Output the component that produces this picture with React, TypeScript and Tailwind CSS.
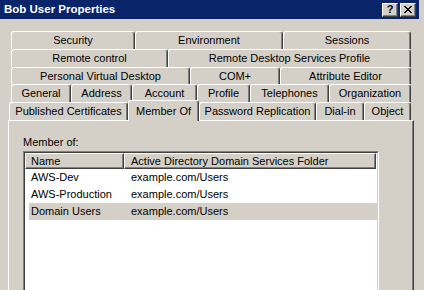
const rows: { label: string; w: string }[][] = [
  [
    { label: 'Security', w: 'w-[124px]' },
    { label: 'Environment', w: 'w-[148px]' },
    { label: 'Sessions', w: 'w-[128px]' },
  ],
  [
    { label: 'Remote control', w: 'w-[157px]' },
    { label: 'Remote Desktop Services Profile', w: 'w-[243px]' },
  ],
  [
    { label: 'Personal Virtual Desktop', w: 'w-[179px]' },
    { label: 'COM+', w: 'w-[90px]' },
    { label: 'Attribute Editor', w: 'w-[131px]' },
  ],
  [
    { label: 'General', w: 'w-[60px]' },
    { label: 'Address', w: 'w-[61px]' },
    { label: 'Account', w: 'w-[65px]' },
    { label: 'Profile', w: 'w-[53px]' },
    { label: 'Telephones', w: 'w-[79px]' },
    { label: 'Organization', w: 'w-[82px]' },
  ],
];

const rowHeights = ['h-[18px]', 'h-[18px]', 'h-[17px]', 'h-[18px]'];

const groups = [
  { name: 'AWS-Dev', folder: 'example.com/Users', sel: false },
  { name: 'AWS-Production', folder: 'example.com/Users', sel: false },
  { name: 'Domain Users', folder: 'example.com/Users', sel: true },
];

function Tab({ label, w }: { label: string; w: string }) {
  return (
    <div
      className={`${w} h-full shrink-0 flex items-center justify-center border-t border-l border-r border-t-white border-l-white border-r-[#404040] shadow-[inset_-1px_0_0_#808080] rounded-t-[3px]`}
    >
      {label}
    </div>
  );
}

function CaptionButton({ children }: { children: React.ReactNode }) {
  return (
    <div className="w-[16px] h-[14px] flex items-center justify-center bg-[#d4d0c8] border border-t-white border-l-white border-r-[#404040] border-b-[#404040] shadow-[inset_-1px_-1px_0_#808080] text-black">
      {children}
    </div>
  );
}

export default function App() {
  return (
    <div className="w-[424px] h-[290px] overflow-hidden bg-[#d4d0c8] flex flex-col font-['Liberation_Sans',Arial,sans-serif] text-[11px] text-black leading-none">
      {/* title bar */}
      <div className="w-[419px] h-[19px] shrink-0 bg-[#0a246a] flex items-center justify-between pl-[4px] pr-[3px]">
        <span className="text-white font-bold text-[11.5px]">Bob User Properties</span>
        <div className="flex gap-[2px]">
          <CaptionButton>
            <span className="font-bold text-[11px] leading-none">?</span>
          </CaptionButton>
          <CaptionButton>
            <svg width="8" height="7" viewBox="0 0 8 7" shapeRendering="crispEdges">
              <path d="M0 0h2v1h-2zM6 0h2v1h-2zM1 1h2v1h-2zM5 1h2v1h-2zM2 2h4v1h-4zM3 3h2v1h-2zM2 4h4v1h-4zM1 5h2v1h-2zM5 5h2v1h-2zM0 6h2v1h-2zM6 6h2v1h-2z" fill="#000" />
            </svg>
          </CaptionButton>
        </div>
      </div>

      {/* tabs + page */}
      <div className="ml-[8px] w-[406px] pt-[12px] flex-1 flex flex-col min-h-0">
        {rows.map((row, i) => (
          <div key={i} className={`${rowHeights[i]} flex px-[3px] shrink-0`}>
            {row.map((t) => (
              <Tab key={t.label} label={t.label} w={t.w} />
            ))}
          </div>
        ))}
        <div className="h-[18px] flex items-end pl-[1px] pr-[3px] shrink-0">
          <Tab label="Published Certificates" w="w-[119px]" />
          <div className="relative z-10 w-[71px] h-[21px] -mb-[1px] shrink-0 bg-[#d4d0c8] flex items-start pt-[5px] justify-center border-t border-l border-r border-t-white border-l-white border-r-[#404040] shadow-[inset_-1px_0_0_#808080] rounded-t-[3px]">
            Member Of
          </div>
          <Tab label="Password Replication" w="w-[117px]" />
          <Tab label="Dial-in" w="w-[48px]" />
          <Tab label="Object" w="w-[47px]" />
        </div>

        {/* page */}
        <div className="flex-1 min-h-0 border-l border-t border-r border-l-white border-t-white border-r-[#404040] shadow-[inset_-1px_0_0_#808080] pl-[14px] pt-[15px]">
          <div className="h-[13px] leading-[13px] mb-[2px]">Member of:</div>
          <div className="w-[356px] h-[200px] border border-t-[#808080] border-l-[#808080] border-r-white border-b-white">
            <div className="h-full bg-white border border-t-[#404040] border-l-[#404040] border-r-[#d4d0c8] border-b-[#d4d0c8]">
              <div className="flex h-[16px]">
                <div className="w-[99px] h-full flex items-center pl-[5px] bg-[#d4d0c8] border-t border-l border-r border-b border-t-white border-l-white border-r-[#404040] border-b-[#404040] shadow-[inset_-1px_-1px_0_#808080]">
                  Name
                </div>
                <div className="w-[252px] h-full flex items-center pl-[6px] bg-[#d4d0c8] border-t border-l border-r border-b border-t-white border-l-white border-r-[#404040] border-b-[#404040] shadow-[inset_-1px_-1px_0_#808080]">
                  Active Directory Domain Services Folder
                </div>
              </div>
              {groups.map((g) => (
                <div
                  key={g.name}
                  className={`ml-[4px] h-[17px] flex items-center ${g.sel ? 'bg-[#d4d0c8]' : ''}`}
                >
                  <span className="w-[95px] pl-[2px]">{g.name}</span>
                  <span className="pl-[7px]">{g.folder}</span>
                </div>
              ))}
            </div>
          </div>
        </div>
      </div>
    </div>
  );
}
